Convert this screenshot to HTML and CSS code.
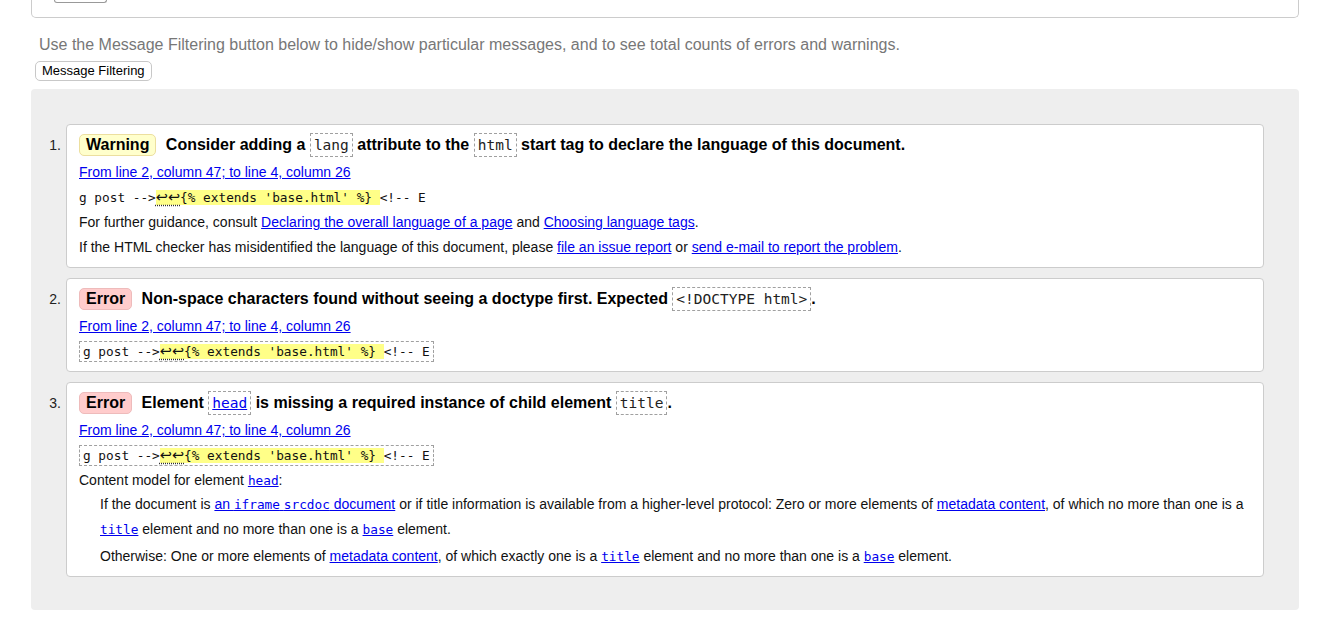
FILE: index.html
```html
<!DOCTYPE html>
<html lang="en">
<head>
<meta charset="utf-8">
<title>Nu Html Checker results</title>
<link rel="stylesheet" href="styles.css">
</head>
<body>
<div class="page">
  <div class="topbox"><div class="stub"></div></div>
  <p class="intro">Use the Message Filtering button below to hide/show particular messages, and to see total counts of errors and warnings.</p>
  <button class="filter-btn" type="button">Message Filtering</button>

  <div class="results">
    <ol class="msgs">
      <li class="msg-row">
        <span class="num">1.</span>
        <div class="card">
          <p class="heading"><strong class="badge warn">Warning</strong> Consider adding a <code class="hcode">lang</code> attribute to the <code class="hcode">html</code> start tag to declare the language of this document.</p>
          <p class="line"><a href="#">From line 2, column 47; to line 4, column 26</a></p>
          <p class="line"><code class="extract">g post --&gt;<b class="hl"><span class="lf">↩↩</span>{% extends 'base.html' %} </b>&lt;!-- E</code></p>
          <p class="line">For further guidance, consult <a href="#">Declaring the overall language of a page</a> and <a href="#">Choosing language tags</a>.</p>
          <p class="line">If the HTML checker has misidentified the language of this document, please <a href="#">file an issue report</a> or <a href="#">send e-mail to report the problem</a>.</p>
        </div>
      </li>
      <li class="msg-row">
        <span class="num">2.</span>
        <div class="card">
          <p class="heading"><strong class="badge err">Error</strong> Non-space characters found without seeing a doctype first. Expected <code class="hcode">&lt;!DOCTYPE html&gt;</code>.</p>
          <p class="line"><a href="#">From line 2, column 47; to line 4, column 26</a></p>
          <p class="line"><code class="extract boxed">g post --&gt;<b class="hl"><span class="lf">↩↩</span>{% extends 'base.html' %} </b>&lt;!-- E</code></p>
        </div>
      </li>
      <li class="msg-row">
        <span class="num">3.</span>
        <div class="card">
          <p class="heading"><strong class="badge err">Error</strong> Element <code class="hcode"><a href="#">head</a></code> is missing a required instance of child element <code class="hcode">title</code>.</p>
          <p class="line"><a href="#">From line 2, column 47; to line 4, column 26</a></p>
          <p class="line"><code class="extract boxed">g post --&gt;<b class="hl"><span class="lf">↩↩</span>{% extends 'base.html' %} </b>&lt;!-- E</code></p>
          <p class="line">Content model for element <a href="#"><code class="icode">head</code></a>:</p>
          <div class="model">
            <p class="mp">If the document is <a href="#">an <code class="icode">iframe</code> <code class="icode">srcdoc</code> document</a> or if title information is available from a higher-level protocol: Zero or more elements of <a href="#">metadata content</a>, of which no more than one is a <a href="#"><code class="icode">title</code></a> element and no more than one is a <a href="#"><code class="icode">base</code></a> element.</p>
            <p class="mp second">Otherwise: One or more elements of <a href="#">metadata content</a>, of which exactly one is a <a href="#"><code class="icode">title</code></a> element and no more than one is a <a href="#"><code class="icode">base</code></a> element.</p>
          </div>
        </div>
      </li>
    </ol>
  </div>
</div>
</body>
</html>
```
FILE: styles.css
```css
html, body {
  margin: 0;
  padding: 0;
  background: #fff;
}
body {
  font-family: "Liberation Sans", Arial, sans-serif;
  color: #000;
}
.page {
  margin-left: 31px;
  width: 1268px;
}
.topbox {
  height: 17px;
  border: 1px solid #ccc;
  border-top: none;
  border-radius: 0 0 5px 5px;
  box-sizing: content-box;
}
.stub {
  margin-left: 22px;
  width: 51px;
  height: 2px;
  border: 1px solid #999;
  border-top: none;
  border-radius: 0 0 3px 3px;
}
.intro {
  margin: 18px 0 0 8px;
  font-size: 16px;
  line-height: 18px;
  color: #777;
}
.filter-btn {
  display: block;
  margin: 7px 0 0 4px;
  height: 20px;
  padding: 0 6px;
  font-family: "Liberation Sans", Arial, sans-serif;
  font-size: 13px;
  line-height: 18px;
  color: #000;
  background: #fff;
  border: 1px solid #c8c8c8;
  border-radius: 5px;
}
.results {
  margin-top: 8px;
  background: #eee;
  border-radius: 4px;
  padding: 35px 35px 33px 0;
}
.msgs {
  list-style: none;
  margin: 0;
  padding: 0;
  display: flex;
  flex-direction: column;
  gap: 10px;
}
.msg-row {
  display: flex;
  align-items: flex-start;
}
.num {
  width: 30px;
  padding-right: 5px;
  padding-top: 6px;
  text-align: right;
  font-size: 14px;
  line-height: 30px;
  color: #222;
}
.card {
  flex: 1;
  min-width: 0;
  background: #fff;
  border: 1px solid #ccc;
  border-radius: 4px;
  padding: 5px 12px 7px;
}
.card p {
  margin: 0;
}
.heading {
  font-size: 16px;
  font-weight: bold;
  line-height: 30px;
}
.badge {
  display: inline-block;
  padding: 0 6px;
  line-height: 20px;
  border-radius: 5px;
  border: 1px solid;
  margin-right: 5px;
}
.badge.warn {
  background: #ffc;
  border-color: #ecdf9f;
}
.badge.err {
  background: #fcc;
  border-color: #ebb;
}
.hcode {
  display: inline-block;
  font-family: "DejaVu Sans Mono", "Liberation Mono", monospace;
  font-size: 14.5px;
  font-weight: normal;
  line-height: 22px;
  padding: 0 3px;
  border: 1px dashed #a0a0a0;
  color: #222;
}
.line {
  font-size: 14px;
  line-height: 25px;
  color: #111;
}
a {
  color: #00e;
  text-decoration: underline;
}
.extract {
  font-family: "DejaVu Sans Mono", "Liberation Mono", monospace;
  font-size: 12.75px;
  color: #111;
}
.extract.boxed {
  display: inline-block;
  line-height: 19px;
  padding: 0 3px;
  border: 1px dashed #a0a0a0;
}
.hl {
  font-weight: normal;
  background: #ff8;
}
.lf {
  font-family: "DejaVu Sans", sans-serif;
  font-size: 14.5px;
  text-decoration: underline dotted #333;
  text-underline-offset: 3px;
}
.icode {
  font-family: "DejaVu Sans Mono", "Liberation Mono", monospace;
  font-size: 12.75px;
}
.model {
  padding-left: 21px;
  margin-top: -1px;
}
.mp {
  font-size: 14px;
  line-height: 24px;
  color: #111;
}
.card .mp.second {
  margin-top: 2px;
}
```
